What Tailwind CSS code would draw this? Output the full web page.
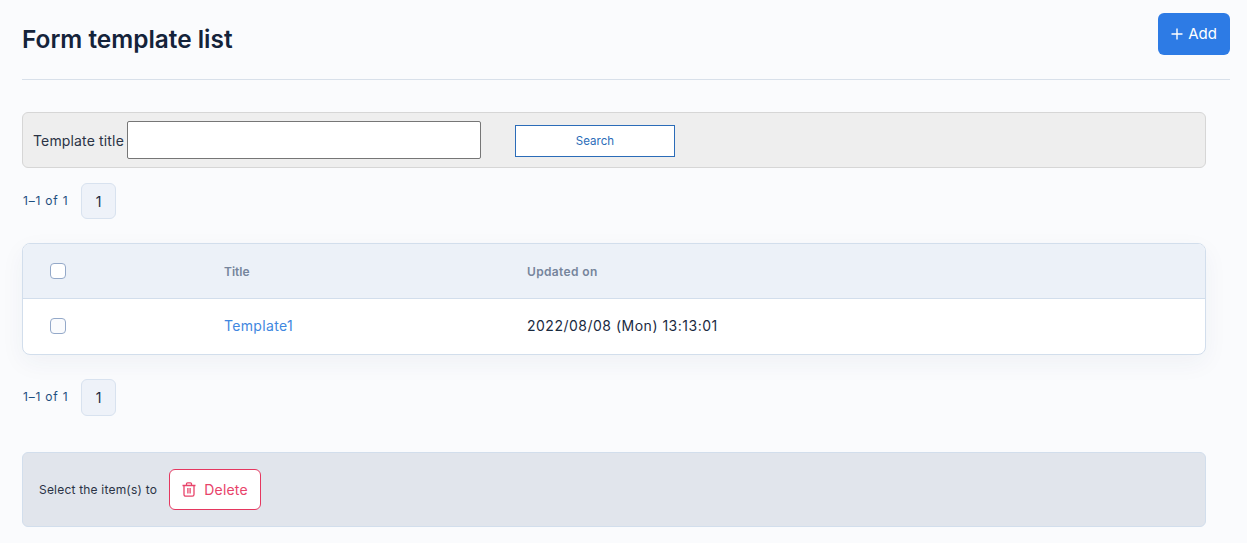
<!doctype html>
<html lang="en">
  <head>
    <title>Form template list</title>
    <meta charset="UTF-8" />
    <meta name="viewport" content="width=device-width, initial-scale=1" />
    <script src="https://cdn.jsdelivr.net/npm/@tailwindcss/browser@4"></script>
  </head>
  <body class="h-[543px] overflow-hidden bg-[#fafbfd] font-['Inter',sans-serif] text-[#1a2a3f]">
    <div class="pl-[22px] pr-[17px]">
      <header class="flex h-[80px] items-start justify-between border-b border-[#d8e0ea] pt-[13px]">
        <h1 class="mt-[9px] text-[24.4px] leading-[34px] font-semibold text-[#14233a]">Form template list</h1>
        <button class="flex h-[42px] w-[72px] items-center justify-center gap-[5px] rounded-[6px] bg-[#2d7be5] text-[15px] text-white">
          <svg class="h-3 w-3" viewBox="0 0 12 12" fill="none" stroke="currentColor" stroke-width="1.4"><path d="M6 .5v11M.5 6h11" /></svg>
          Add
        </button>
      </header>

      <div class="w-[1184px]">
        <form class="mt-[32px] flex h-[56px] items-center rounded-[6px] border border-[#d6d6d6] bg-[#eeeeee] pl-[10px]">
          <label for="title" class="text-[14px] tracking-[0.15px] text-[#2a3345]">Template title</label>
          <input id="title" type="text" class="ml-[3px] h-[38px] w-[354px] rounded-[2px] border border-[#767676] bg-white" />
          <button type="button" class="mt-[2px] ml-[34px] h-[32px] w-[160px] border border-[#2b6cb8] bg-white pt-[2px] text-[11.5px] text-[#2b6cb8]">Search</button>
        </form>

        <div class="mt-[15px] flex items-center gap-[12px]">
          <span class="w-[47px] pl-[1px] text-[12px] tracking-[0.8px] whitespace-nowrap text-[#1d4f80]">1–1 of 1</span>
          <span class="flex h-[36px] w-[35px] items-center justify-center rounded-[6px] border border-[#d8e2ef] bg-[#eef2f9] text-[14px]">1</span>
        </div>

        <div class="mt-[24px] overflow-hidden rounded-[8px] border border-[#d2deec] bg-white shadow-[0_8px_24px_rgba(30,50,90,0.05)]">
          <div class="flex h-[55px] items-center border-b border-[#d2deec] bg-[#ecf1f8] text-[12px] font-semibold text-[#76859c]">
            <span class="ml-[27px] h-[16px] w-[16px] rounded-[4px] border border-[#94a9c9] bg-white"></span>
            <span class="mt-[2px] ml-[158px] w-[303px]">Title</span>
            <span class="mt-[2px] tracking-[0.35px]">Updated on</span>
          </div>
          <div class="flex h-[55px] items-center pb-[2px] text-[14px]">
            <span class="ml-[27px] h-[16px] w-[16px] rounded-[4px] border border-[#94a9c9] bg-[#fafbfd]"></span>
            <a href="#" class="ml-[158px] w-[303px] tracking-[0.33px] text-[#3f87e0]">Template1</a>
            <span class="tracking-[0.5px] text-[#1a2a3f]">2022/08/08 (Mon) 13:13:01</span>
          </div>
        </div>

        <div class="mt-[24px] flex items-center gap-[12px]">
          <span class="mb-[2px] w-[47px] pl-[1px] text-[12px] tracking-[0.8px] whitespace-nowrap text-[#1d4f80]">1–1 of 1</span>
          <span class="flex h-[37px] w-[35px] items-center justify-center rounded-[6px] border border-[#d8e2ef] bg-[#eef2f9] text-[14px]">1</span>
        </div>

        <div class="mt-[36px] flex h-[75px] items-center rounded-[6px] border border-[#d2deec] bg-[#e1e5ec] pl-[16px]">
          <span class="text-[12px] tracking-[0.2px] text-[#2a3345]">Select the item(s) to</span>
          <button class="ml-[12px] flex h-[41px] w-[92px] items-center justify-center gap-[8px] rounded-[6px] border border-[#e5375f] bg-white text-[14px] tracking-[0.2px] text-[#e8436a]">
            <svg class="h-[15px] w-[14px]" viewBox="0 0 14 15" fill="none" stroke="currentColor" stroke-width="1.3"><path d="M.5 3.500h13M4.500 3.500V1.800a1 1 0 0 1 1-1h3a1 1 0 0 1 1 1v1.700M2 3.500v9a1.700 1.700 0 0 0 1.700 1.700h6.600a1.700 1.700 0 0 0 1.700-1.700v-9M5.900 6v5.500M8.100 6v5.500" /></svg>
            Delete
          </button>
        </div>
      </div>
    </div>
  </body>
</html>
